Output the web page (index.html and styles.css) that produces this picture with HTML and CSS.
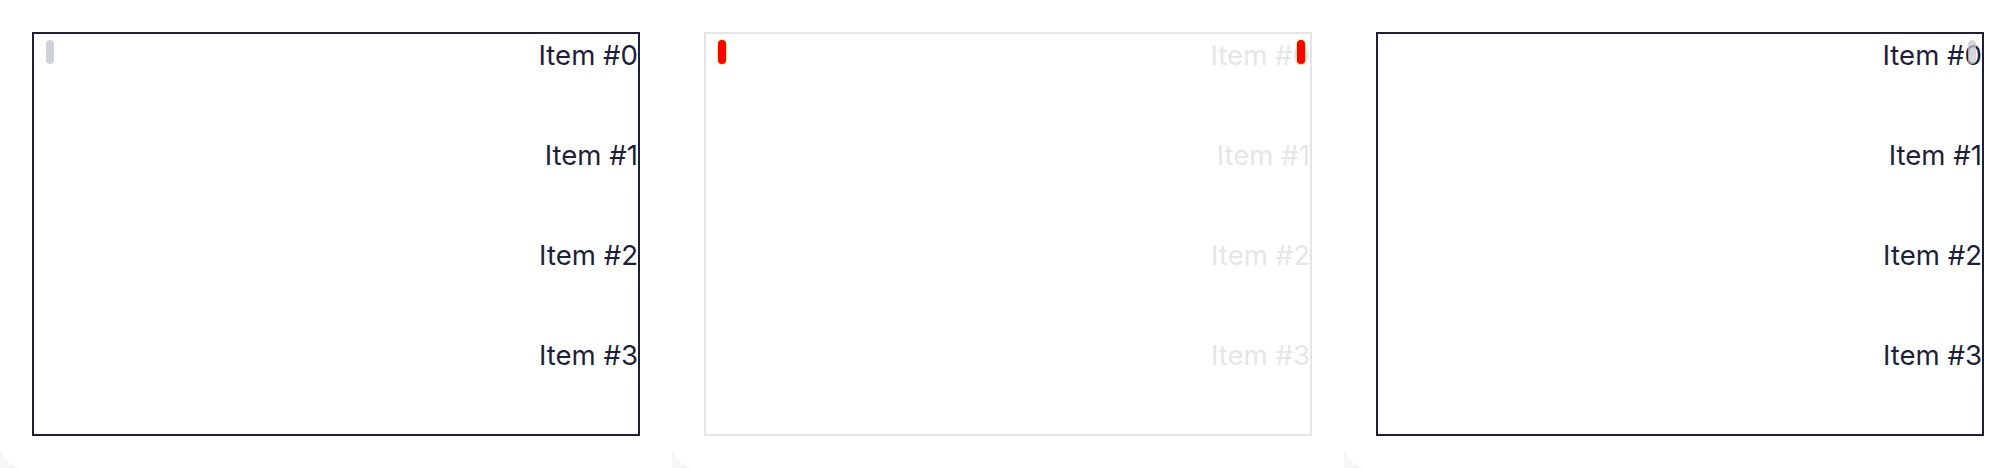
FILE: index.html
```html
<!DOCTYPE html>
<html lang="en">
<head>
<meta charset="utf-8">
<title>Scroll panels</title>
<link rel="stylesheet" href="styles.css">
</head>
<body>
<div class="row">
  <section class="card">
    <div class="panel dark">
      <ul class="list">
        <li class="item">Item #0</li>
        <li class="item">Item #1</li>
        <li class="item">Item #2</li>
        <li class="item">Item #3</li>
      </ul>
      <span class="thumb thumb-left grey"></span>
    </div>
  </section>
  <section class="card">
    <div class="panel light">
      <ul class="list">
        <li class="item">Item #0</li>
        <li class="item">Item #1</li>
        <li class="item">Item #2</li>
        <li class="item">Item #3</li>
      </ul>
      <span class="thumb thumb-left red"></span>
      <span class="thumb thumb-right-5 red"></span>
    </div>
  </section>
  <section class="card">
    <div class="panel dark">
      <ul class="list">
        <li class="item">Item #0</li>
        <li class="item">Item #1</li>
        <li class="item">Item #2</li>
        <li class="item">Item #3</li>
      </ul>
      <span class="thumb thumb-right-6 grey-soft"></span>
    </div>
  </section>
</div>
</body>
</html>
```

FILE: styles.css
```css
html, body {
  margin: 0;
  padding: 0;
}
body {
  background: #f6f6f6;
  font-family: Inter, "Noto Sans", sans-serif;
  width: 2016px;
  height: 468px;
  overflow: hidden;
}
.row {
  display: flex;
  width: 2016px;
}
.card {
  width: 672px;
  height: 468px;
  box-sizing: border-box;
  padding: 32px;
  background: #ffffff;
  border-bottom-left-radius: 24px;
}
.panel {
  position: relative;
  width: 608px;
  height: 404px;
  box-sizing: border-box;
  border: 2px solid #1e1f3b;
  overflow: hidden;
  background: #fff;
}
.panel.light {
  border-color: #e5e5e5;
}
.list {
  list-style: none;
  margin: 0;
  padding: 0;
}
.item {
  height: 100px;
  font-size: 27.6px;
  line-height: 42px;
  text-align: right;
  color: #1e1f3b;
}
.light .item {
  color: #e6e6e6;
}
.thumb {
  position: absolute;
  top: 6px;
  width: 8px;
  height: 24px;
  border-radius: 4px;
}
.thumb-left {
  left: 12px;
}
.thumb-right-5 {
  right: 5px;
}
.thumb-right-6 {
  right: 6px;
}
.grey {
  background: #d1d2d8;
}
.grey-soft {
  background: rgba(200, 202, 210, 0.75);
}
.red {
  background: #ff0000;
  box-shadow: 0 0 0 0.5px #ffe600;
}
```
